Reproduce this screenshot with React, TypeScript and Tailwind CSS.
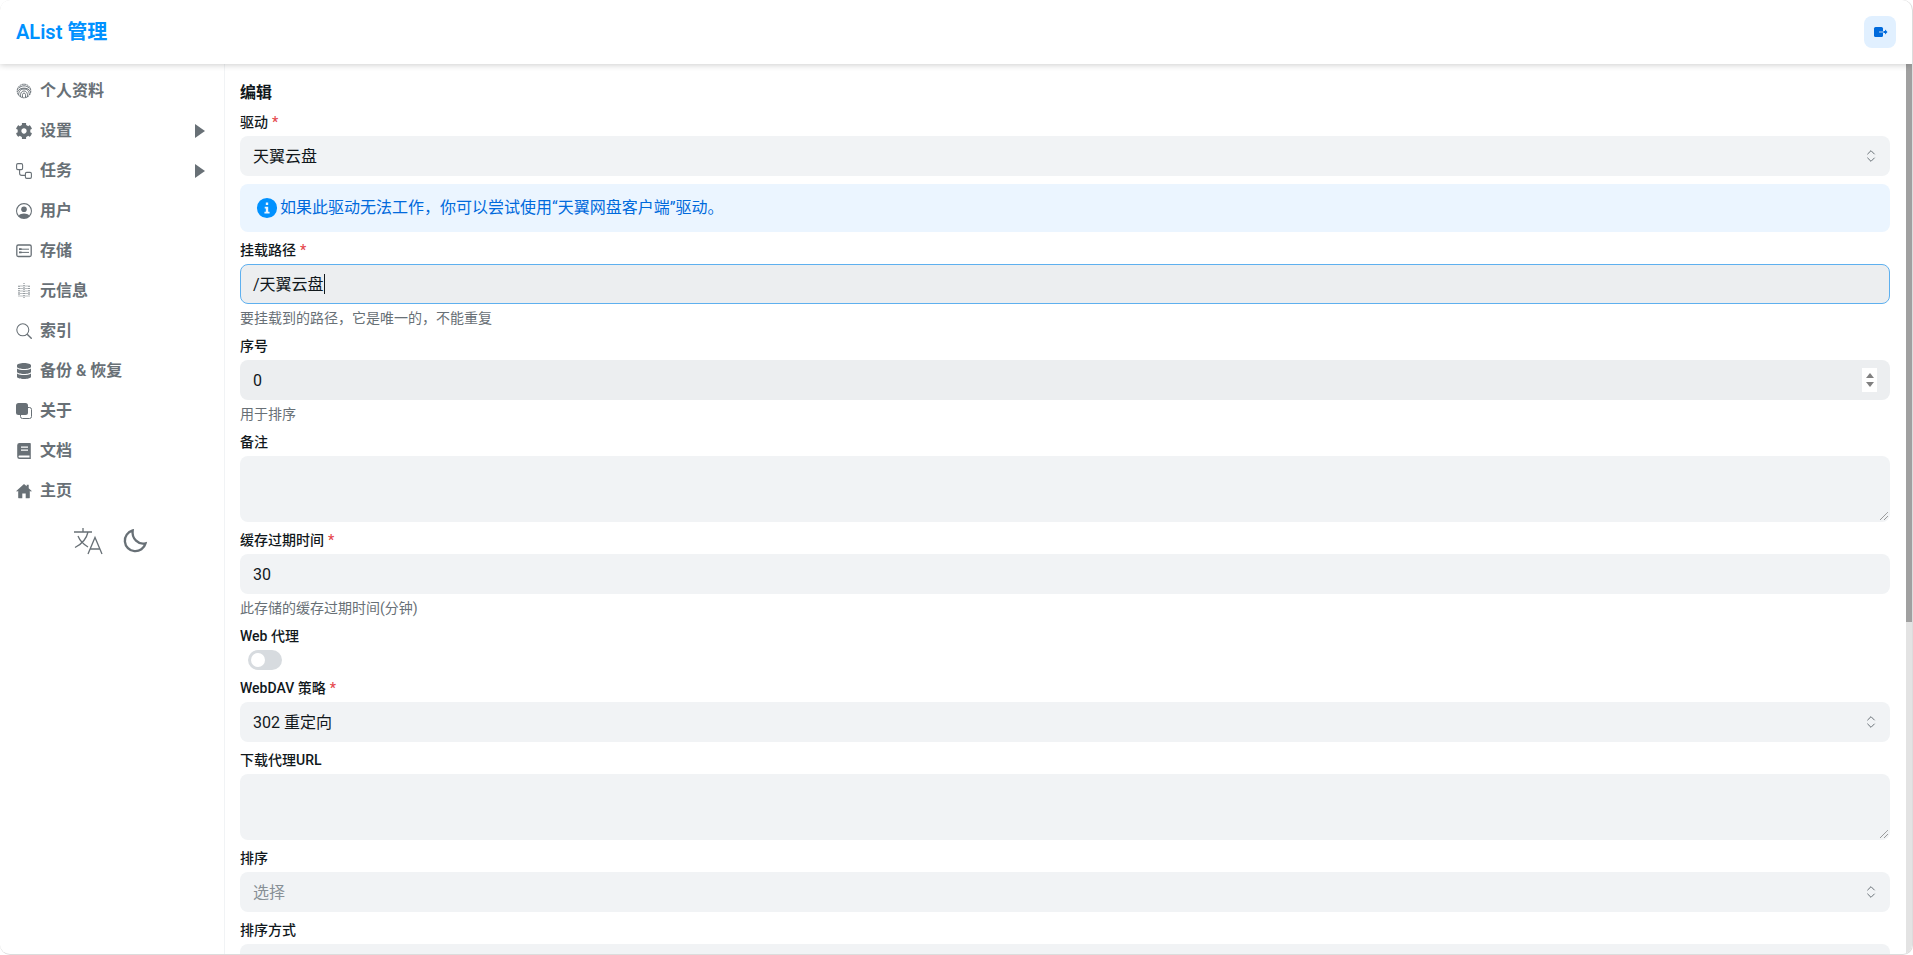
import React from "react";
import { ChevronsUpDown } from "lucide-react";

const F = "font-['Roboto','Noto_Sans_CJK_SC',sans-serif]";
const I = "w-4 h-4 shrink-0 text-[#687076]";

const Finger = () => (
  <svg viewBox="0 0 24 24" className={I} fill="none" stroke="currentColor" strokeWidth="1.500">
    <circle cx="12" cy="12" r="10.200" strokeDasharray="3 0.700" />
    <path d="M4 8c4-5 12-5 16 0" />
    <path d="M2.500 13c2-7 17-7 19 0" />
    <path d="M4 18c0-6 3-9 8-9s8 3 8 9" />
    <path d="M7 21c-1-5 1-9 5-9s6 4 5 9" />
    <path d="M10 22c-1-4 0-7 2-7s3 3 2 7" />
  </svg>
);
const Gear = () => (
  <svg viewBox="18 14 476 484" className={I} fill="currentColor">
    <path d="M487.400 315.700l-42.600-24.600c4.300-23.200 4.300-47 0-70.200l42.600-24.600c4.900-2.800 7.100-8.600 5.500-14-11.100-35.600-30-67.800-54.700-94.600-3.800-4.100-10-5.100-14.800-2.300L380.800 110c-17.900-15.400-38.500-27.300-60.800-35.100V25.800c0-5.600-3.900-10.500-9.400-11.700-36.700-8.200-74.300-7.800-109.200 0-5.500 1.200-9.400 6.100-9.400 11.700V75c-22.200 7.900-42.800 19.800-60.800 35.100L88.700 85.500c-4.900-2.800-11-1.900-14.800 2.300-24.700 26.700-43.600 58.900-54.700 94.600-1.700 5.400.6 11.200 5.500 14L67.300 221c-4.300 23.200-4.300 47 0 70.200l-42.600 24.600c-4.900 2.800-7.100 8.600-5.500 14 11.100 35.600 30 67.800 54.700 94.600 3.800 4.100 10 5.100 14.800 2.300l42.600-24.600c17.900 15.400 38.500 27.300 60.800 35.100v49.200c0 5.600 3.900 10.500 9.400 11.700 36.700 8.200 74.300 7.800 109.200 0 5.500-1.200 9.400-6.100 9.400-11.700v-49.200c22.200-7.900 42.800-19.800 60.800-35.100l42.600 24.600c4.900 2.800 11 1.900 14.800-2.300 24.700-26.700 43.600-58.900 54.700-94.600 1.500-5.500-.7-11.300-5.600-14.100zM256 336c-44.100 0-80-35.900-80-80s35.900-80 80-80 80 35.900 80 80-35.900 80-80 80z" />
  </svg>
);
const Flow = () => (
  <svg viewBox="0 0 16 16" className={I} fill="none" stroke="currentColor" strokeWidth="1.100">
    <rect x="0.600" y="0.600" width="6" height="6" rx="1.300" />
    <rect x="9.400" y="9.400" width="6" height="6" rx="1.300" />
    <path d="M3.600 6.600V10.200a2.200 2.200 0 0 0 2.200 2.200h3.600" />
  </svg>
);
const User = () => (
  <svg viewBox="0 0 16 16" className={I} fill="currentColor">
    <path fillRule="evenodd" d="M8 0a8 8 0 1 0 0 16A8 8 0 0 0 8 0zm0 1.200a6.800 6.800 0 0 1 5.200 11.200C12 11.200 10.200 10.500 8 10.500s-4 .7-5.200 1.900A6.800 6.800 0 0 1 8 1.200z" />
    <circle cx="8" cy="6.300" r="2.800" />
  </svg>
);
const Storage = () => (
  <svg viewBox="0 0 16 16" className={I} fill="none" stroke="currentColor">
    <rect x="0.800" y="2" width="14.400" height="11.500" rx="1.500" strokeWidth="1.300" />
    <path d="M3 6.200h10M3 9.400h10" strokeWidth="1" />
    <path d="M3 6.200h2.600M3 9.400h2.600" strokeWidth="1.700" />
  </svg>
);
const Meta = () => (
  <svg viewBox="0 0 16 16" className={I} fill="none" stroke="currentColor" strokeWidth="0.900" strokeDasharray="1 1">
    <path d="M2.500 3h11M2.500 5.500h11M2.500 8h11M2.500 10.500h11M2.500 13h11M8 0v16M3 3v10M13 3v10" />
  </svg>
);
const Search = () => (
  <svg viewBox="0 0 16 16" className={I} fill="none" stroke="currentColor" strokeWidth="1.050">
    <circle cx="6.800" cy="6.800" r="6" />
    <path d="M11.200 11.200L15.700 15.700" strokeWidth="1.400" />
  </svg>
);
const Db = () => (
  <svg viewBox="0 0 448 512" className={I} fill="currentColor">
    <path d="M448 73.100v45.700C448 159.100 347.700 192 224 192S0 159.100 0 118.900V73.100C0 32.900 100.300 0 224 0s224 32.900 224 73.100zM448 176v102.900C448 319.100 347.700 352 224 352S0 319.100 0 278.900V176c48.100 33.100 136.200 48.600 224 48.600S399.900 209.100 448 176zM448 336v102.900C448 479.100 347.700 512 224 512S0 479.100 0 438.900V336c48.100 33.100 136.200 48.600 224 48.600S399.900 369.100 448 336z" />
  </svg>
);
const Copy = () => (
  <svg viewBox="0 0 16 16" className={I}>
    <rect x="4.500" y="4.500" width="11" height="11" rx="2" fill="none" stroke="currentColor" />
    <rect x="0" y="0" width="12" height="12" rx="2.500" fill="currentColor" />
  </svg>
);
const Book = () => (
  <svg viewBox="0 0 16 16" className={I} fill="currentColor">
    <path fillRule="evenodd" d="M3.500 0H14a.8.800 0 0 1 .8.800V16H3.500A2.300 2.300 0 0 1 1.200 13.700V2.300A2.300 2.300 0 0 1 3.500 0zM5 3.500v1.200h7V3.500zm0 3v1.200h7V6.500zM3.500 12.500a1 1 0 0 0 0 2h10v-2z" />
  </svg>
);
const Home = () => (
  <svg viewBox="0 0 16 16" className={I} fill="currentColor">
    <path d="M8 1L.3 8l.7.800L2.200 7.800v7c0 .3.200.5.500.5H6.300v-4.800h3.400v4.800h3.600c.3 0 .5-.2.500-.5v-7l1.200 1 .7-.8-3-2.700V1.800h-2v1.500z" />
  </svg>
);
const Caret = () => (
  <svg viewBox="0 0 16 16" className="w-[10px] h-[14px] shrink-0 text-[#687076]" preserveAspectRatio="none" fill="currentColor">
    <path d="M0 0L16 8L0 16z" />
  </svg>
);

const items: [React.ReactNode, string, boolean?][] = [
  [<Finger />, "个人资料"],
  [<Gear />, "设置", true],
  [<Flow />, "任务", true],
  [<User />, "用户"],
  [<Storage />, "存储"],
  [<Meta />, "元信息"],
  [<Search />, "索引"],
  [<Db />, "备份 & 恢复"],
  [<Copy />, "关于"],
  [<Book />, "文档"],
  [<Home />, "主页"],
];

const Label = ({ text, req }: { text: string; req?: boolean }) => (
  <div className="h-5 mb-1 text-sm leading-5 font-medium text-[#11181c]">
    {text}
    {req && <span className="text-[#e5484d] ml-1">*</span>}
  </div>
);
const Help = ({ text }: { text: string }) => (
  <div className="mt-1 h-5 text-sm leading-5 text-[#687076]">{text}</div>
);
const Box = ({ children, cls = "" }: { children?: React.ReactNode; cls?: string }) => (
  <div className={`h-10 rounded-[8px] bg-[#f1f3f5] pl-[13px] pr-[11px] flex items-center text-[#11181c] text-base ${cls}`}>{children}</div>
);
const Select = ({ text, muted }: { text: string; muted?: boolean }) => (
  <Box cls="justify-between">
    <span className={`pt-px ${muted ? "text-[#889096]" : ""}`}>{text}</span>
    <ChevronsUpDown className="w-4 h-4 text-[#687076]" strokeWidth={1.500} />
  </Box>
);
const Area = () => (
  <div className="relative h-[66px] rounded-[8px] bg-[#f1f3f5]">
    <svg viewBox="0 0 8 8" className="absolute right-[2px] bottom-[2px] w-2 h-2 text-[#555]" stroke="currentColor" fill="none" strokeWidth="0.800" strokeDasharray="1 0.500">
      <path d="M0 8L8 0M4 8L8 4" />
    </svg>
  </div>
);

export default function App() {
  return (
    <div className={`${F} h-[955px] overflow-hidden bg-white flex flex-col relative rounded-[10px] border-b border-r border-[#dcdcdc]`}>
      <header className="h-16 shrink-0 flex items-center justify-between pl-4 pr-4 bg-white shadow-[0_1px_6px_rgba(0,0,0,0.2)] rounded-t-[10px] relative z-10">
        <span className="text-xl font-semibold text-[#0091ff]">AList 管理</span>
        <button className="w-8 h-8 rounded-[8px] bg-[#e1f0ff] flex items-center justify-center">
          <svg viewBox="0 0 16 16" className="w-4 h-4 text-[#006adc]" fill="currentColor">
            <rect x="2" y="3" width="9" height="10" rx="1.500" />
            <path d="M11 7h2V5.500L15.500 8 13 10.500V9h-2z" />
            <path d="M7 7.300h5v1.400H7z" fill="#7fb4ee" />
          </svg>
        </button>
      </header>
      <div className="flex-1 min-h-0 flex">
        <aside className="w-[225px] shrink-0 border-r border-[#f1f3f5] pt-[7px] flex flex-col">
          <nav className="flex flex-col">
            {items.map(([icon, text, arrow]) => (
              <div key={text} className="h-10 pl-4 pr-[19px] flex items-center gap-2 text-base font-semibold text-[#687076]">
                {icon}
                <span className="flex-1">{text}</span>
                {arrow && <Caret />}
              </div>
            ))}
          </nav>
          <div className="flex justify-center items-center gap-[18px] mt-[16px] pr-[2px]">
            <svg viewBox="0 0 30 28" className="w-[30px] h-[28px] text-[#687076]" fill="none" stroke="currentColor" strokeWidth="1.300">
              <path d="M1 5h18M10 1v4M15 5c-1.500 7-6 12-13 15.500M5 9c2 5 5 8 10 11M15 27l7-16.500L29 27M17 22h10" />
            </svg>
            <svg viewBox="0 0 24 24" className="w-7 h-7 text-[#687076]" fill="none" stroke="currentColor" strokeWidth="2">
              <path d="M10 3a9 9 0 1 0 11 11c-6 1.500-12-4-11-11z" />
            </svg>
          </div>
        </aside>
        <main className="flex-1 min-w-0 overflow-hidden flex">
          <div className="flex-1 min-w-0 pl-[15px] pr-4 pt-4 flex flex-col gap-2 [&>*]:shrink-0">
            <h1 className="h-6 text-base leading-6 pt-px font-bold text-[#11181c]">编辑</h1>
            <div>
              <Label text="驱动" req />
              <Select text="天翼云盘" />
            </div>
            <div className="h-12 rounded-[8px] bg-[#ebf5ff] pl-4 flex items-center gap-[2px] text-base text-[#006adc]">
              <svg viewBox="0 0 24 24" className="w-[22px] h-[22px] shrink-0 text-[#0091ff]" fill="currentColor">
                <path fillRule="evenodd" d="M12 1a11 11 0 1 0 0 22 11 11 0 0 0 0-22zm-1.300 5h2.600v2.600h-2.600zM9.500 10.500h3.800V16h1.500v2H9.200v-2h1.500v-3.500H9.500z" />
              </svg>
              如果此驱动无法工作，你可以尝试使用“天翼网盘客户端”驱动。
            </div>
            <div>
              <Label text="挂载路径" req />
              <div className="h-10 rounded-[8px] bg-[#eceef0] border border-[#5eb0ef] pl-3 flex items-center text-base text-[#11181c]">
                <span className="pt-px">/天翼云盘</span><span className="w-px h-[20px] bg-[#11181c]" />
              </div>
              <Help text="要挂载到的路径，它是唯一的，不能重复" />
            </div>
            <div>
              <Label text="序号" />
              <div className="h-10 rounded-[8px] bg-[#eceef0] pl-[13px] pr-[13px] flex items-center justify-between text-base text-[#11181c]">
                <span className="pt-px">0</span>
                <div className="w-[15px] h-6 bg-white flex flex-col items-center justify-center gap-[4px]">
                  <svg viewBox="0 0 8 5" className="w-2 h-[5px] text-[#808080]" fill="currentColor"><path d="M4 0L8 5H0z" /></svg>
                  <svg viewBox="0 0 8 5" className="w-2 h-[5px] text-[#808080]" fill="currentColor"><path d="M4 5L8 0H0z" /></svg>
                </div>
              </div>
              <Help text="用于排序" />
            </div>
            <div>
              <Label text="备注" />
              <Area />
            </div>
            <div>
              <Label text="缓存过期时间" req />
              <Box><span className="pt-px">30</span></Box>
              <Help text="此存储的缓存过期时间(分钟)" />
            </div>
            <div>
              <Label text="Web 代理" />
              <div className="h-5 pl-2 flex items-center">
                <div className="w-[34px] h-5 rounded-full bg-[#d7dbdf] p-[3px]">
                  <div className="w-[14px] h-[14px] rounded-full bg-white" />
                </div>
              </div>
            </div>
            <div>
              <Label text="WebDAV 策略" req />
              <Select text="302 重定向" />
            </div>
            <div>
              <Label text="下载代理URL" />
              <Area />
            </div>
            <div>
              <Label text="排序" />
              <Select text="选择" muted />
            </div>
            <div>
              <Label text="排序方式" />
              <Box />
            </div>
          </div>
          <div className="w-[6px] shrink-0 bg-[#e3e3e3] flex flex-col">
            <div className="h-[558px] bg-[#a0a0a0]" />
          </div>
        </main>
      </div>
    </div>
  );
}
